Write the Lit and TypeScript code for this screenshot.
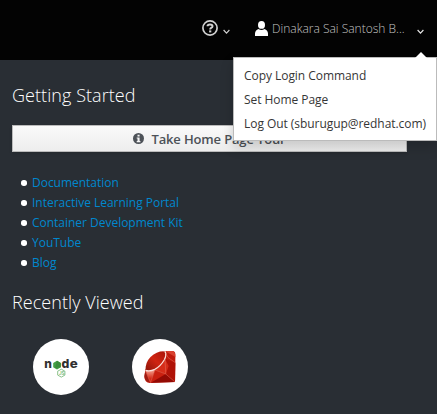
import { LitElement, html, css, svg } from "lit";
import { customElement } from "lit/decorators.js";

const caret = svg`<path d="M.6 1 L3.5 4.1 L6.4 1" fill="none" stroke="currentColor" stroke-width="1.15"/>`;

@customElement("node-logo")
class NodeLogo extends LitElement {
  static styles = css`
    :host { display: flex; }
    text { font-family: Inter, "Open Sans", sans-serif; }
    .word { font-size: 12.4px; font-weight: 800; fill: #303030; }
    .tag { font-size: 4.5px; font-weight: 600; fill: #6fb36a; }
  `;
  render() {
    return html`<svg width="56" height="56" viewBox="0 0 56 56">
      <text class="word" x="11.2" y="29.2" textLength="7.6" lengthAdjust="spacingAndGlyphs">n</text>
      <path d="M24 21.7 L27.8 23.9 V28.2 L24 30.4 L20.2 28.2 V23.9Z" fill="#43a047"/>
      <path d="M24 21.7 L27.8 23.9 V28.2 L22 29Z" fill="#398e3d"/>
      <text class="word" x="28.4" y="29.2" textLength="7.8" lengthAdjust="spacingAndGlyphs">d</text>
      <text class="word" x="36.8" y="29.2" textLength="8" lengthAdjust="spacingAndGlyphs">e</text>
      <path d="M28.3 30.2 L31.9 32.2 V36.1 L28.3 38.1 L24.7 36.1 V32.2Z" fill="none" stroke="#7dbb7e" stroke-width=".9"/>
      <text class="tag" x="25.9" y="35.8">JS</text>
    </svg>`;
  }
}

@customElement("ruby-logo")
class RubyLogo extends LitElement {
  static styles = css`:host { display: flex; }`;
  render() {
    return html`<svg width="56" height="56" viewBox="0 0 56 56">
      <defs>
        <linearGradient id="crown" x1="0" y1="1" x2="1" y2="0">
          <stop offset="0" stop-color="#8d1409"/><stop offset=".5" stop-color="#cf2412"/><stop offset="1" stop-color="#a91409"/>
        </linearGradient>
        <linearGradient id="shine" x1="0" y1="0" x2="0" y2="1">
          <stop offset="0" stop-color="#f3a08f"/><stop offset=".7" stop-color="#d42a17"/>
        </linearGradient>
      </defs>
      <path d="M33 12 H40.5 Q43.4 12.2 43.4 15.5 L43 43 L18 44 Q12.5 43.5 12.4 38 L13.4 30 L22 20Z" fill="#bf1a0c"/>
      <path d="M33.7 12 H40.5 Q43.3 12.4 43.4 18 L35.5 13.5Z" fill="#d8402f"/>
      <path d="M33 19.7 L43.4 23.7 L43 43 L33.8 35Z" fill="#b01207"/>
      <path d="M33 19.7 L23 31 L33.8 35 L36.6 27Z" fill="#d62c19"/>
      <path d="M13.6 31.8 L23 31 L18.5 43.3Z" fill="url(#shine)"/>
      <path d="M23 31 L33.8 35 L19 43.5Z" fill="#c92010"/>
      <path d="M33.8 35 L43 43 L19 43.8Z" fill="#930a04"/>
      <path d="M13.3 32 L18 43.5 Q12.6 42.5 12.4 37Z" fill="#a01b11"/>
      <path d="M13.8 31.2 Q12.8 24 18.5 18 Q24.5 12.2 31.5 12.2 Q35.5 15 32.4 20.5 Q29 26.5 23 30 Q17.5 32.8 13.8 31.2Z" fill="url(#crown)"/>
      <path d="M33 12.4 Q35 16 32.2 21 Q28.5 27.2 22.8 30.4 Q17.8 32.8 13.5 31.4" fill="none" stroke="#fae0da" stroke-width="1.3"/>
      <path d="M33 20 L33.8 35 L43 43 M33.8 35 L23 31 L18.5 43.5 M33.7 14 L36 18.5 L43.4 23.7 M13.4 32 L18.5 43.5" fill="none" stroke="#e5705f" stroke-width=".5"/>
    </svg>`;
  }
}

@customElement("app-root")
class AppRoot extends LitElement {
  static styles = css`
    :host {
      display: flex; flex-direction: column; position: relative; box-sizing: border-box;
      width: 437px; height: 414px; overflow: hidden; background: #292e34;
      font: 12px/20px "Open Sans", sans-serif; color: #fff;
    }
    svg { display: block; flex: none; }
    header { display: flex; height: 60px; background: #030303; box-sizing: border-box; padding: 18px 0 0 202px; align-items: flex-start; flex: none; }
    .help { display: flex; width: 52px; color: #d1d1d1; }
    .help .caret { margin: 11px 0 0 5px; }
    .help .ring { margin-top: 2px; }
    .user { display: flex; flex: 1; color: #e8e8e8; }
    .person { margin: 3px 4px 0 1px; }
    .name { font-weight: 300; width: 145px; height: 20px; line-height: 21px; color: #c4c4c4; white-space: nowrap; }
    .user .caret { margin-top: 11px; }
    .menu {
      position: absolute; left: 233px; top: 57px; width: 204px; height: 84px; box-sizing: border-box;
      background: #fff; border: 1px solid #bbb; box-shadow: 0 6px 12px rgba(0,0,0,.175);
      padding: 6px 0 0 10px; color: #363636; z-index: 1;
    }
    .item { height: 24px; line-height: 24px; white-space: nowrap; letter-spacing: -.05px; }
    .tip { position: absolute; right: 9px; top: -6px; }
    main { display: flex; flex-direction: column; padding: 0 12px; }
    h2 { font-size: 18px; line-height: 24px; font-weight: 300; letter-spacing: .06px; margin: 23px 0 18px; }
    .tour {
      display: flex; justify-content: center; align-items: center; box-sizing: border-box;
      width: 395px; height: 27px; border: 1px solid #bbb; background: linear-gradient(#fafafa, #ededed);
      box-shadow: 0 2px 3px rgba(3,3,3,.1); color: #4d5258; font-size: 13px; font-weight: 600; gap: 7px;
      letter-spacing: -.15px;
    }
    ul { list-style: none; margin: 21px 0 0; padding: 0 0 0 9px; }
    li { display: flex; align-items: center; height: 20px; gap: 6px; color: #0088ce; letter-spacing: -.02px; }
    .dot { width: 5.5px; height: 5.5px; margin-right: -.5px; border-radius: 50%; background: #fff; }
    h2.recent { margin: 17px 0 25px; }
    .apps { display: flex; gap: 43px; padding-left: 21px; }
    .app { width: 56px; height: 56px; border-radius: 50%; background: #fff; }
  `;
  links = ["Documentation", "Interactive Learning Portal", "Container Development Kit", "YouTube", "Blog"];
  items = ["Copy Login Command", "Set Home Page", "Log Out (sburugup@redhat.com)"];
  render() {
    return html`
      <header>
        <div class="help">
          <svg class="ring" width="16" height="16" viewBox="0 0 16 16">
            <circle cx="8" cy="8" r="7.1" fill="none" stroke="currentColor" stroke-width="1.7"/>
            <path d="M5.5 6.3 Q5.6 4.4 8 4.4 Q10.5 4.4 10.5 6.2 Q10.5 7.3 9.2 7.9 Q8.2 8.4 8.2 9.4" fill="none" stroke="currentColor" stroke-width="2"/>
            <rect x="7.1" y="10.4" width="2.2" height="2" fill="currentColor"/>
          </svg>
          <svg class="caret" width="7" height="5">${caret}</svg>
        </div>
        <div class="user">
          <svg class="person" width="13" height="15" viewBox="0 0 13 15">
            <ellipse cx="6.5" cy="3.9" rx="3.5" ry="3.9" fill="#fff"/>
            <path d="M0 15 V12.5 Q.2 9.2 3.5 8 Q6.5 9.8 9.5 8 Q12.8 9.2 13 12.5 V15Z" fill="#fff"/>
          </svg>
          <span class="name">Dinakara Sai Santosh B...</span>
          <svg class="caret" width="7" height="5">${caret}</svg>
        </div>
      </header>
      <div class="menu">
        <svg class="tip" width="12" height="6"><path d="M0 6 L6 0 L12 6Z" fill="#fff"/></svg>
        ${this.items.map((t) => html`<div class="item">${t}</div>`)}
      </div>
      <main>
        <h2>Getting Started</h2>
        <div class="tour">
          <svg width="11" height="11" viewBox="0 0 11 11">
            <circle cx="5.5" cy="5.5" r="5.5" fill="#4d5258"/>
            <path d="M4.5 1.8H6.6V3.4H4.5Z M3.7 4.4H6.6V8H7.4V9.2H3.7V8H4.5V5.6H3.7Z" fill="#f5f5f5"/>
          </svg>
          <span>Take Home Page Tour</span>
        </div>
        <ul>${this.links.map((t) => html`<li><span class="dot"></span>${t}</li>`)}</ul>
        <h2 class="recent">Recently Viewed</h2>
        <div class="apps">
          <div class="app"><node-logo></node-logo></div>
          <div class="app"><ruby-logo></ruby-logo></div>
        </div>
      </main>
    `;
  }
}
